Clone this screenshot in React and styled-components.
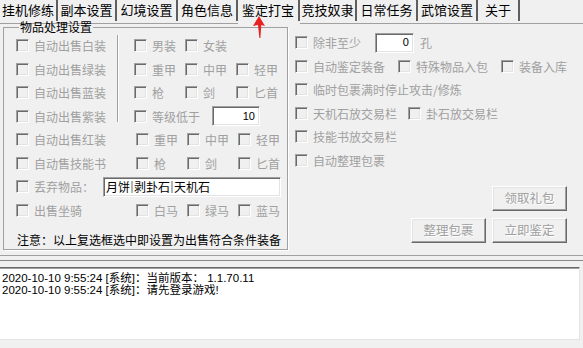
import styled, { createGlobalStyle } from "styled-components";

const GlobalStyle = createGlobalStyle`
  html, body {
    margin: 0;
    padding: 0;
    background: #f0f0f0;
  }
  body {
    font-family: "Noto Sans CJK SC", "Liberation Sans", sans-serif;
  }
`;

const Window = styled.div`
  position: relative;
  width: 583px;
  height: 348px;
  overflow: hidden;
  background: #f0f0f0;
  font-family: "Noto Sans CJK SC", "Liberation Sans", sans-serif;
  font-size: 12px;
  line-height: 1;
  color: #000;
`;

const TabBar = styled.div`
  display: flex;
  height: 24px;
  box-sizing: border-box;
  border-bottom: 1px solid #a0a0a0;
`;

const Tab = styled.div`
  width: ${({ $w }) => $w}px;
  height: ${({ $active }) => ($active ? 24 : 21)}px;
  box-sizing: border-box;
  padding-top: 3px;
  text-align: center;
  font-size: 13px;
  line-height: 13px;
  background: #f0f0f0;
  border-right: 2px solid #5e5e5e;
  border-image: linear-gradient(#5e5e5e, #5e5e5e) 0 1 / 0 2px 0 0;
  ${({ $active }) =>
    $active &&
    "border-image: linear-gradient(to bottom, #5e5e5e 21px, transparent 21px) 0 1 / 0 2px 0 0;"}
`;

const Page = styled.div`
  display: flex;
  height: 232px;
  box-sizing: border-box;
  padding: 0 0 0 3px;
  border-bottom: 1px solid #a0a0a0;
`;

const Group = styled.fieldset`
  width: 285px;
  height: 230px;
  box-sizing: border-box;
  margin: -4px 0 0 0;
  padding: 0 0 0 12px;
  border: 1px solid #a0a0a0;
  box-shadow: 1px 1px 0 #fff;
  min-width: 0;
`;

const Legend = styled.legend`
  padding: 0 1px;
  margin-left: 3px;
  font-size: 12px;
  line-height: 14px;
  color: #000;
`;

const Block = styled.div`
  display: flex;
`;

const LeftStack = styled.div`
  display: flex;
  flex-direction: column;
  width: 103px;
`;

const Divider = styled.div`
  width: 0;
  margin: 1px 15px 6px 0;
  border-left: 1px solid #a0a0a0;
  border-right: 1px solid #fff;
`;

const MidStack = styled.div`
  display: flex;
  flex-direction: column;
`;

const Row = styled.div`
  display: flex;
  align-items: center;
  height: 23.5px;
  gap: ${({ $gap }) => $gap || 0}px;
`;

const Cell = styled.div`
  width: ${({ $w }) => $w}px;
  flex: none;
  display: flex;
  align-items: center;
`;

const CheckWrap = styled.span`
  display: inline-flex;
  align-items: center;
  gap: 5px;
  color: #a0a0a0;
  font-size: 12px;
  line-height: 13px;
  white-space: nowrap;
`;

const Box = styled.span`
  width: 13px;
  height: 13px;
  flex: none;
  box-sizing: border-box;
  background: #f0f0f0;
  border-top: 1px solid #a0a0a0;
  border-left: 1px solid #a0a0a0;
  border-right: 1px solid #fff;
  border-bottom: 1px solid #fff;
  box-shadow: inset 1px 1px 0 #696969, inset -1px -1px 0 #e3e3e3;
`;

const Field = styled.div`
  width: ${({ $w }) => $w}px;
  height: 20px;
  box-sizing: border-box;
  margin-left: ${({ $ml }) => $ml || 0}px;
  padding: ${({ $right }) => ($right ? "0 4px 0 0" : "0 0 0 2px")};
  display: flex;
  align-items: center;
  justify-content: ${({ $right }) => ($right ? "flex-end" : "flex-start")};
  background: #fff;
  border-top: 1px solid #a0a0a0;
  border-left: 1px solid #a0a0a0;
  border-right: 1px solid #fff;
  border-bottom: 1px solid #fff;
  box-shadow: inset 1px 1px 0 #696969, inset -1px -1px 0 #e3e3e3;
  font-family: ${({ $right }) =>
    $right ? '"Liberation Sans", sans-serif' : '"Noto Sans CJK SC", sans-serif'};
  font-size: ${({ $right }) => ($right ? 11 : 12)}px;
  color: #000;
`;

const Sep = styled.span`
  display: inline-block;
  width: 2px;
  height: 12px;
  margin: 0 1px;
  background: #b4b4b4;
`;

const Unit = styled.span`
  margin-left: 6px;
  color: #a0a0a0;
  font-size: 12px;
`;

const Note = styled.div`
  margin: 11px 0 0 1px;
  font-size: 12px;
  line-height: 13px;
  color: #000;
`;

const Right = styled.div`
  flex: 1;
  display: flex;
  flex-direction: column;
  padding: 6.75px 16px 0 7px;
`;

const Buttons = styled.div`
  display: flex;
  flex-direction: column;
  align-items: flex-end;
  gap: 7px;
  margin-top: 14px;
`;

const ButtonRow = styled.div`
  display: flex;
  gap: 6px;
`;

const Button = styled.div`
  width: 75px;
  height: 25px;
  box-sizing: border-box;
  display: flex;
  align-items: center;
  justify-content: center;
  background: #f0f0f0;
  border-top: 1px solid #fff;
  border-left: 1px solid #fff;
  border-right: 1px solid #696969;
  border-bottom: 1px solid #696969;
  box-shadow: inset -1px -1px 0 #a0a0a0, inset 1px 1px 0 #e3e3e3;
  color: #a0a0a0;
  text-shadow: 1px 1px 0 #fff;
  font-size: 12.5px;
`;

const Splitter = styled.div`
  height: 6px;
  margin-top: 4px;
  border-top: 1px solid #8a8a8a;
`;

const Log = styled.div`
  height: 73px;
  box-sizing: border-box;
  margin-right: 3px;
  padding: 4px 0 0 2px;
  background: #fff;
  border-top: 1px solid #696969;
  box-shadow: inset 0 1px 0 #a0a0a0;
  border-right: 1px solid #e3e3e3;
  border-bottom: 1px solid #e3e3e3;
  font-family: "Liberation Sans", "Noto Sans CJK SC", sans-serif;
  font-size: 11.5px;
  line-height: 12px;
`;

const LogLine = styled.div`
  white-space: pre;
`;

const Arrow = styled.svg`
  position: absolute;
  left: 250px;
  top: 14px;
`;

const Check = ({ label }) => (
  <CheckWrap>
    <Box />
    {label}
  </CheckWrap>
);

const tabs = [
  ["挂机修练", 58],
  ["副本设置", 59],
  ["幻境设置", 61],
  ["角色信息", 60],
  ["鉴定打宝", 62, true],
  ["竞技奴隶", 57],
  ["日常任务", 61],
  ["武馆设置", 60],
  ["关于", 42],
];

const Trio = ({ items }) =>
  items.map((t) => (
    <Cell key={t} $w={51}>
      <Check label={t} />
    </Cell>
  ));

export default function App() {
  return (
    <Window>
      <GlobalStyle />
      <TabBar>
        {tabs.map(([name, w, active]) => (
          <Tab key={name} $w={w} $active={active}>
            {name}
          </Tab>
        ))}
      </TabBar>

      <Page>
        <Group>
          <Legend>物品处理设置</Legend>
          <Block>
            <LeftStack>
              <Row><Check label="自动出售白装" /></Row>
              <Row><Check label="自动出售绿装" /></Row>
              <Row><Check label="自动出售蓝装" /></Row>
              <Row><Check label="自动出售紫装" /></Row>
            </LeftStack>
            <Divider />
            <MidStack>
              <Row><Trio items={["男装", "女装"]} /></Row>
              <Row><Trio items={["重甲", "中甲", "轻甲"]} /></Row>
              <Row><Trio items={["枪", "剑", "匕首"]} /></Row>
              <Row>
                <Check label="等级低于" />
                <Field $w={48} $ml={12} $right>10</Field>
              </Row>
            </MidStack>
          </Block>
          <Row>
            <Cell $w={120}><Check label="自动出售红装" /></Cell>
            <Trio items={["重甲", "中甲", "轻甲"]} />
          </Row>
          <Row>
            <Cell $w={120}><Check label="自动售技能书" /></Cell>
            <Trio items={["枪", "剑", "匕首"]} />
          </Row>
          <Row>
            <Cell $w={87}><Check label="丢弃物品：" /></Cell>
            <Field $w={178}>
              月饼<Sep />剥卦石<Sep />天机石
            </Field>
          </Row>
          <Row>
            <Cell $w={120}><Check label="出售坐骑" /></Cell>
            <Trio items={["白马", "绿马", "蓝马"]} />
          </Row>
          <Note>注意：以上复选框选中即设置为出售符合条件装备</Note>
        </Group>

        <Right>
          <Row>
            <Check label="除非至少" />
            <Field $w={39} $ml={14} $right>0</Field>
            <Unit>孔</Unit>
          </Row>
          <Row $gap={13}>
            <Check label="自动鉴定装备" />
            <Check label="特殊物品入包" />
            <Check label="装备入库" />
          </Row>
          <Row><Check label="临时包裹满时停止攻击/修炼" /></Row>
          <Row $gap={11}>
            <Check label="天机石放交易栏" />
            <Check label="卦石放交易栏" />
          </Row>
          <Row><Check label="技能书放交易栏" /></Row>
          <Row><Check label="自动整理包裹" /></Row>
          <Buttons>
            <Button>领取礼包</Button>
            <ButtonRow>
              <Button>整理包裹</Button>
              <Button>立即鉴定</Button>
            </ButtonRow>
          </Buttons>
        </Right>
      </Page>

      <Splitter />
      <Log>
        <LogLine>2020-10-10 9:55:24 [系统]：当前版本： 1.1.70.11</LogLine>
        <LogLine>2020-10-10 9:55:24 [系统]：请先登录游戏!</LogLine>
      </Log>

      <Arrow width="20" height="26" viewBox="0 0 20 26">
        <polygon points="9,2 15,12 11.3,11 10.4,24 9.4,24 8,11 3,12" fill="#e8201f" />
      </Arrow>
    </Window>
  );
}
